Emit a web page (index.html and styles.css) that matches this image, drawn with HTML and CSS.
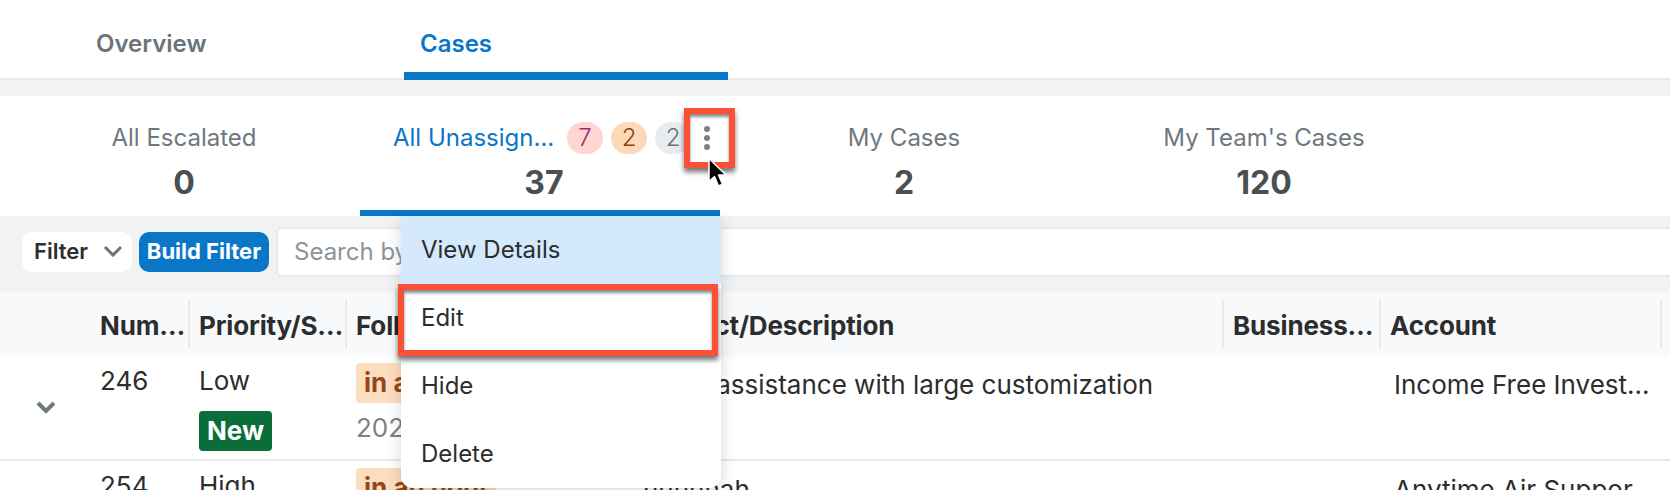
FILE: index.html
```html
<!DOCTYPE html>
<html lang="en">
<head>
  <meta charset="UTF-8" />
  <title>Cases</title>
  <link rel="stylesheet" href="styles.css">
</head>
<body>
  <div class="page">
    <div class="tabs">
      <div class="tab">Overview</div>
      <div class="tab active">Cases</div>
    </div>

    <div class="dashlets">
      <div class="dash-item">
        <div class="dash-label">All Escalated</div>
        <div class="dash-count">0</div>
      </div>
      <div class="dash-item active">
        <div class="dash-label">
          <span class="dash-name">All Unassigned Cases</span>
          <span class="badge red">7</span>
          <span class="badge orange">2</span>
          <span class="badge grey">2</span>
          <svg class="kebab" width="6" height="24" viewBox="0 0 6 24"><circle cx="3" cy="3" r="3"/><circle cx="3" cy="12" r="3"/><circle cx="3" cy="21" r="3"/></svg>
        </div>
        <div class="dash-count">37</div>
      </div>
      <div class="dash-item">
        <div class="dash-label">My Cases</div>
        <div class="dash-count">2</div>
      </div>
      <div class="dash-item">
        <div class="dash-label">My Team's Cases</div>
        <div class="dash-count">120</div>
      </div>
    </div>

    <div class="filter-bar">
      <div class="filter-select">Filter
        <svg width="20" height="12" viewBox="0 0 20 12"><path d="M2 2l8 8 8-8" fill="none" stroke="#6b747a" stroke-width="3"/></svg>
      </div>
      <div class="build-filter">Build Filter</div>
      <div class="search-box">Search by subject, number</div>
    </div>

    <div class="table">
      <div class="head-row">
        <div></div>
        <div class="head-cell">Number</div>
        <div class="head-cell">Priority/Status</div>
        <div class="head-cell">Follow Up Date</div>
        <div class="head-cell">Subject/Description</div>
        <div class="head-cell">Business Hours</div>
        <div class="head-cell">Account</div>
      </div>

      <div class="row">
        <div class="cell-toggle">
          <svg width="20" height="13" viewBox="0 0 20 13"><path d="M2 2l8 8 8-8" fill="none" stroke="#6f7a80" stroke-width="4"/></svg>
        </div>
        <div class="cell num">246</div>
        <div class="cell num">Low<span class="tag-new">New</span></div>
        <div class="cell num">
          <span class="tag-due">in an hour</span>
          <span class="date">2023/05/12</span>
        </div>
        <div class="cell subject">Need assistance with large customization</div>
        <div class="cell text"></div>
        <div class="cell text">Income Free Investments</div>
      </div>

      <div class="row">
        <div class="cell-toggle"></div>
        <div class="cell num">254</div>
        <div class="cell num">High</div>
        <div class="cell num"><span class="tag-due">in an hour</span></div>
        <div class="cell subject">nnnnnah</div>
        <div class="cell text"></div>
        <div class="cell text">Anytime Air Support Inc</div>
      </div>
    </div>

    <div class="row-menu">
      <div class="menu-item hover">View Details</div>
      <div class="menu-item">Edit</div>
      <div class="menu-item">Hide</div>
      <div class="menu-item">Delete</div>
    </div>

    <div class="callout callout-kebab"></div>
    <div class="callout callout-edit"></div>

    <svg class="cursor" width="20" height="32" viewBox="0 0 20 32">
      <path d="M2 1.5v23l5.5-5 4 9.5 4-1.7-4-9.3h7.5z" fill="#000" stroke="#fff" stroke-width="1.5" stroke-linejoin="round"/>
    </svg>
  </div>
</body>
</html>
```

FILE: styles.css
```css
body {
  margin: 0;
  background: #fff;
  font-family: 'Inter', 'Liberation Sans', sans-serif;
  font-size: 26px;
  color: #2b2d2e;
}

.page {
  position: relative;
  width: 1670px;
  height: 490px;
  overflow: hidden;
  background: #f0f2f4;
}

/* top tabs */
.tabs {
  display: flex;
  height: 80px;
  padding-left: 80px;
  box-sizing: border-box;
  background: #fff;
  border-bottom: 2px solid #e4e9ec;
}

.tab {
  width: 324px;
  height: 80px;
  box-sizing: border-box;
  padding: 27px 0 0 16px;
  font-size: 24px;
  line-height: 34px;
  font-weight: 600;
  color: #6b747a;
}

.tab.active {
  color: #0a76c8;
  border-bottom: 8px solid #0a76c8;
}

/* list view tiles */
.dashlets {
  display: flex;
  height: 120px;
  margin-top: 16px;
  background: #fff;
}

.dash-item {
  width: 360px;
  height: 120px;
  box-sizing: border-box;
  padding: 26px 0 0 8px;
  text-align: center;
}

.dash-item.active {
  border-bottom: 6px solid #0a76c8;
}

.dash-label {
  height: 32px;
  line-height: 32px;
  font-size: 24px;
  color: #6f787e;
}

.active .dash-label {
  display: flex;
  align-items: center;
  padding-left: 25px;
}

.dash-name {
  width: 166px;
  margin-right: 8px;
  overflow: hidden;
  white-space: nowrap;
  text-overflow: ellipsis;
  text-align: left;
  color: #0a76c8;
}

.badge {
  width: 36px;
  height: 32px;
  margin-right: 8px;
  border-radius: 16px;
  text-align: center;
  font-weight: 300;
}

.badge.red { background: #ffd5d2; color: #9b2d6e; }
.badge.orange { background: #fdd9b8; color: #8f3f10; }
.badge.grey { background: #e8ecef; color: #6b747a; margin-right: 0; }

.kebab {
  margin-left: 13px;
  fill: #7a8288;
}

.dash-count {
  margin-top: 9px;
  line-height: 40px;
  font-size: 32px;
  font-weight: 700;
  color: #4a4f52;
}

/* filter row */
.filter-bar {
  display: flex;
  align-items: flex-start;
  height: 76px;
  padding: 11px 0 0 22px;
  box-sizing: border-box;
}

.filter-select {
  display: flex;
  align-items: center;
  justify-content: space-between;
  width: 110px;
  height: 40px;
  margin: 5px 7px 0 0;
  padding: 0 9px 2px 12px;
  box-sizing: border-box;
  background: #fff;
  border-radius: 10px;
  font-size: 22px;
  font-weight: 600;
}

.build-filter {
  width: 130px;
  height: 40px;
  margin: 5px 7px 0 0;
  line-height: 38px;
  text-align: center;
  background: #0a76c8;
  border-radius: 10px;
  font-size: 22px;
  font-weight: 700;
  color: #fff;
}

.search-box {
  flex: 1;
  height: 50px;
  margin-right: -8px;
  padding-left: 16px;
  box-sizing: border-box;
  line-height: 46px;
  background: #fff;
  border: 2px solid #e4e9ec;
  border-radius: 6px;
  font-size: 24px;
  color: #8d9499;
}

/* table */
.table {
  background: #fff;
}

.head-row,
.row {
  display: grid;
  grid-template-columns: 91px 99px 157px 287px 590px 157px 281px;
}

.head-row {
  height: 64px;
  padding-top: 8px;
  box-sizing: border-box;
  background: #f8f9fb;
}

.head-cell {
  height: 48px;
  padding-left: 9px;
  box-sizing: border-box;
  border-right: 2px solid #e4e9ec;
  line-height: 52px;
  font-weight: 700;
  letter-spacing: -0.15px;
  white-space: nowrap;
  overflow: hidden;
  text-overflow: ellipsis;
}

.row {
  height: 105px;
  box-sizing: border-box;
  border-bottom: 2px solid #e4e9ec;
}

.cell-toggle {
  padding: 45px 0 0 36px;
}

.cell-toggle svg {
  display: block;
}

.cell {
  overflow: hidden;
  white-space: nowrap;
  line-height: 30px;
}

.cell.num {
  padding: 10px 0 0 9px;
}

.cell.text {
  padding: 14px 4px 0 13px;
  text-overflow: ellipsis;
}

.cell.subject {
  padding: 14px 14px 0 9px;
}

.tag-new {
  display: block;
  width: 73px;
  height: 40px;
  margin-top: 15px;
  line-height: 40px;
  text-align: center;
  background: #0a6e3a;
  border-radius: 4px;
  font-weight: 700;
  color: #fff;
}

.tag-due {
  display: block;
  width: 140px;
  height: 40px;
  margin-top: -3px;
  padding-left: 8px;
  box-sizing: border-box;
  line-height: 40px;
  background: #fdddc0;
  border-radius: 4px;
  font-weight: 700;
  color: #96471a;
}

.date {
  display: block;
  margin-top: 10px;
  color: #7a8288;
}

/* popover and annotations sit on top of the page */
.row-menu {
  position: absolute;
  left: 401px;
  top: 216px;
  width: 320px;
  background: #fff;
  border-radius: 0 0 12px 12px;
  box-shadow: 0 4px 16px rgba(0, 0, 0, 0.16);
  font-size: 24px;
}

.menu-item {
  height: 68px;
  padding-left: 20px;
  line-height: 68px;
}

.menu-item.hover {
  background: #d4e9fc;
}

.callout {
  position: absolute;
  box-sizing: border-box;
  border: 6px solid #fa5038;
  box-shadow: 0 4px 5px rgba(0, 0, 0, 0.55), inset 0 3px 3px rgba(0, 0, 0, 0.45);
}

.callout-kebab {
  left: 684px;
  top: 108px;
  width: 51px;
  height: 60px;
}

.callout-edit {
  left: 398px;
  top: 284px;
  width: 320px;
  height: 72px;
}

.cursor {
  position: absolute;
  left: 707px;
  top: 157px;
}
```
